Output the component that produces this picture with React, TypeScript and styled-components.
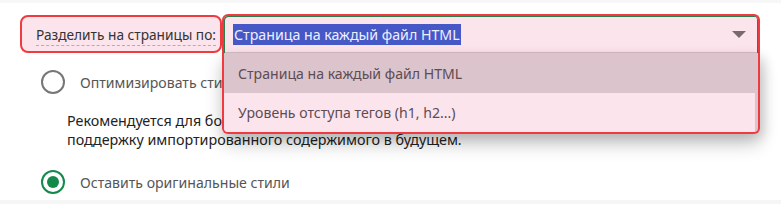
import React from "react";
import styled, { createGlobalStyle } from "styled-components";

const Global = createGlobalStyle`
  html, body { margin: 0; padding: 0; background: #ffffff; }
  body { font-family: "Noto Sans", "Open Sans", "Liberation Sans", sans-serif; }
  * { box-sizing: border-box; }
`;

const Page = styled.div`
  width: 781px;
  height: 204px;
  overflow: hidden;
  background: #ffffff;
  border-top: 3px solid #f7f7f7;
  border-bottom: 4px solid #f6f6f6;
  display: flex;
  flex-direction: column;
`;

const Row = styled.div`
  display: flex;
  align-items: flex-start;
  padding-left: 20px;
  margin-top: 11px;
  position: relative;
  z-index: 2;
`;

const LabelBox = styled.div`
  width: 202px;
  height: 38px;
  margin-top: 1px;
  background: #fce4ec;
  border: 2px solid #ef3b3f;
  border-radius: 8px;
  display: flex;
  align-items: center;
  padding-left: 14px;
  padding-top: 3px;
  overflow: hidden;
`;

const LabelText = styled.span`
  font-size: 13.7px;
  color: #333333;
  border-bottom: 1px dashed #b8aab0;
  line-height: 18px;
  padding-bottom: 1px;
  white-space: nowrap;
`;

const SelectWrap = styled.div`
  position: relative;
  width: 538px;
`;

const SelectField = styled.div`
  height: 39px;
  background: #fce4ec;
  border: 2px solid #ef3b3f;
  border-bottom: none;
  border-radius: 6px 6px 0 0;
  display: flex;
  align-items: center;
  justify-content: space-between;
  box-shadow: inset 1px 1px 0 #2e7d4f, inset -1px 0 0 #2e7d4f, inset 0 -1px 0 #d9bcc6;
  padding: 0 12px 0 9px;
`;

const Selected = styled.span`
  background: #4657c6;
  color: #eef0ff;
  font-size: 14.2px;
  line-height: 21px;
  padding: 0 1px;
  white-space: nowrap;
`;

const Caret = styled.svg`
  width: 14px;
  height: 8px;
  margin-top: 1px;
`;

const Listbox = styled.ul`
  position: absolute;
  left: 0;
  right: 0;
  top: 100%;
  margin: 0;
  padding: 0 3px 0 0;
  list-style: none;
  background: #dcc4cc;
  border: 2px solid #ef3b3f;
  border-top: none;
  border-radius: 0 0 6px 6px;
  overflow: hidden;
  box-shadow: 0 10px 18px rgba(0, 0, 0, 0.22), 4px 4px 12px rgba(0, 0, 0, 0.12);
`;

const Option = styled.li<{ $active?: boolean }>`
  height: ${(p) => (p.$active ? "40px" : "39px")};
  display: flex;
  align-items: center;
  padding-left: 14px;
  font-size: 14.1px;
  color: #5d4c53;
  background: ${(p) => (p.$active ? "#dcc4cc" : "#fce4ec")};
  white-space: nowrap;
`;

const Body = styled.div`
  display: flex;
  flex-direction: column;
  padding-left: 41px;
  position: relative;
  z-index: 1;
`;

const RadioRow = styled.div<{ $top: number }>`
  display: flex;
  align-items: center;
  gap: 15px;
  margin-top: ${(p) => p.$top}px;
  height: 24px;
`;

const RadioCircle = styled.span<{ $checked?: boolean }>`
  width: 24px;
  height: 24px;
  border-radius: 50%;
  border: 2.5px solid ${(p) => (p.$checked ? "#13894a" : "#777777")};
  display: flex;
  align-items: center;
  justify-content: center;
  flex: none;
  &::after {
    content: "";
    width: 12px;
    height: 12px;
    border-radius: 50%;
    background: ${(p) => (p.$checked ? "#13894a" : "transparent")};
  }
`;

const RadioLabel = styled.span`
  font-size: 14.1px;
  color: #555555;
  white-space: nowrap;
`;

const Hint = styled.p`
  margin: 17px 0 0 26px;
  font-size: 14.3px;
  line-height: 19px;
  color: #222222;
`;

export default function App() {
  return (
    <>
      <Global />
      <Page>
        <Row>
          <LabelBox>
            <LabelText>Разделить на страницы по:</LabelText>
          </LabelBox>
          <SelectWrap>
            <SelectField>
              <Selected>Страница на каждый файл HTML</Selected>
              <Caret viewBox="0 0 14 8">
                <path d="M0 0 H14 L7 7 Z" fill="#7a6770" />
              </Caret>
            </SelectField>
            <Listbox>
              <Option $active>Страница на каждый файл HTML</Option>
              <Option>Уровень отступа тегов (h1, h2...)</Option>
            </Listbox>
          </SelectWrap>
        </Row>
        <Body>
          <RadioRow $top={17}>
            <RadioCircle />
            <RadioLabel>Оптимизировать стили</RadioLabel>
          </RadioRow>
          <Hint>
            Рекомендуется для более удобного редактирования и обеспечивает
            <br />
            поддержку импортированного содержимого в будущем.
          </Hint>
          <RadioRow $top={21}>
            <RadioCircle $checked />
            <RadioLabel>Оставить оригинальные стили</RadioLabel>
          </RadioRow>
        </Body>
      </Page>
    </>
  );
}
